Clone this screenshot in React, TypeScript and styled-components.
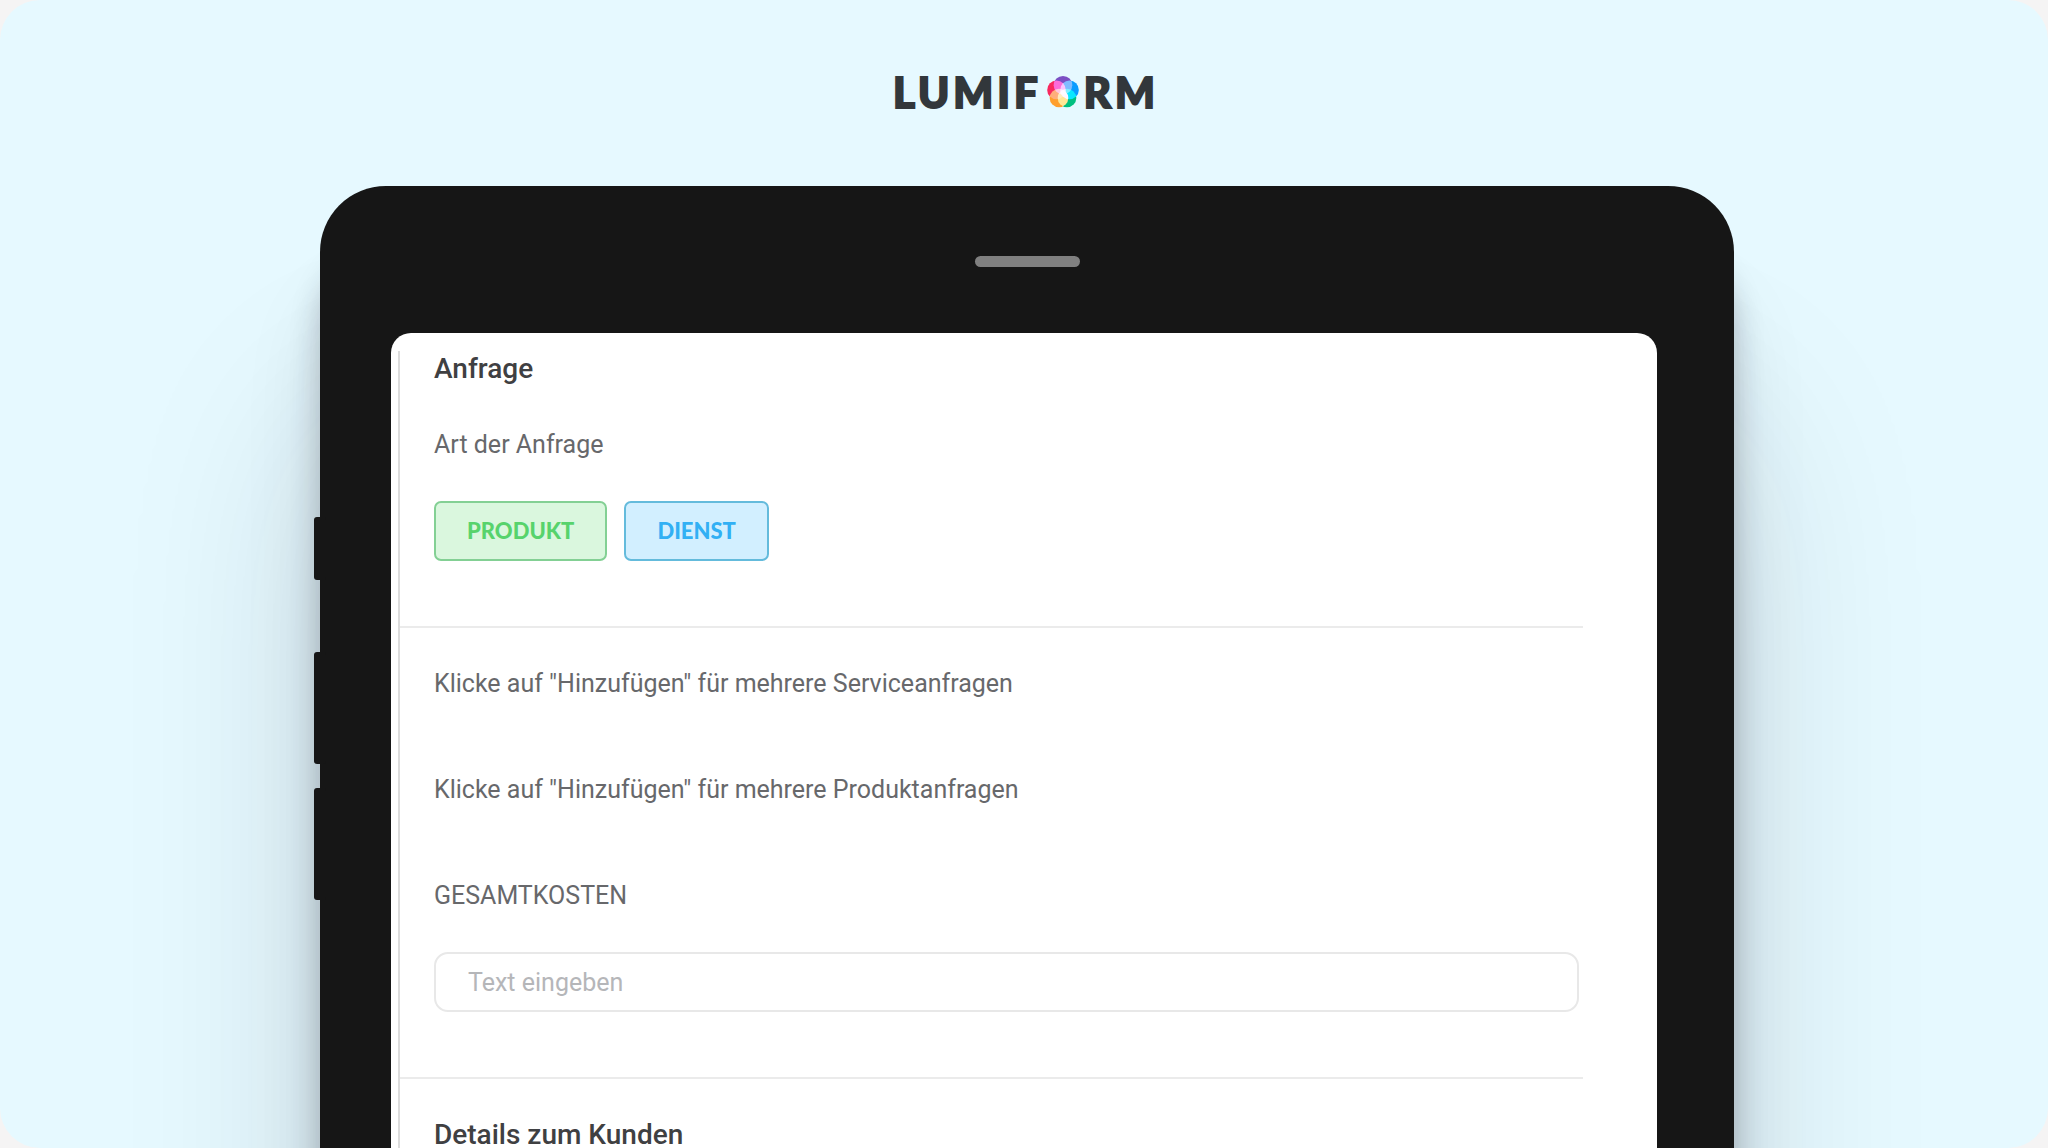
import React from "react";
import styled, { createGlobalStyle } from "styled-components";

const GlobalStyle = createGlobalStyle`
  *, *::before, *::after { box-sizing: border-box; }
  body {
    margin: 0;
    background: #f5f4f4;
    font-family: Roboto, "Liberation Sans", sans-serif;
    color: #67686b;
  }
`;

const Stage = styled.main`
  display: flex;
  flex-direction: column;
  height: 100vh;
  overflow: hidden;
  border-radius: 40px;
  background: #e6f9ff;
`;

const Brand = styled.header`
  display: flex;
  align-items: center;
  justify-content: center;
  flex: none;
  gap: 5px;
  height: 186px;
  padding: 0 0 2px 4px;
`;

const BrandText = styled.span`
  font: 900 42px/56px Lato, sans-serif;
  letter-spacing: 4px;
  color: #32373b;
  -webkit-text-stroke: 2px #32373b;
`;

const BrandMark = styled.svg`
  display: block;
  width: 32px;
  height: 34px;
  isolation: isolate;
`;

const Petal = styled.circle`
  mix-blend-mode: screen;
`;

const Tablet = styled.section`
  position: relative;
  flex: none;
  margin: 0 314px 0 320px;
  padding-top: 70px;
  border-radius: 66px 66px 0 0;
  background: #161616;
  box-shadow:
    0 230px 200px rgba(30, 30, 40, 0.15),
    0 110px 80px rgba(30, 30, 40, 0.1),
    0 70px 30px rgba(30, 30, 40, 0.24);
`;

const SideKey = styled.span<{ $top: number; $height: number }>`
  position: absolute;
  left: -6px;
  top: ${(p) => p.$top}px;
  width: 12px;
  height: ${(p) => p.$height}px;
  border-radius: 3px;
  background: #161616;
`;

const Speaker = styled.div`
  width: 105px;
  height: 11px;
  margin: 0 auto 66px;
  border-radius: 6px;
  background: #808080;
`;

const Screen = styled.div`
  margin: 0 77px 0 71px;
  padding: 18px 74px 230px 7px;
  border-radius: 20px 20px 0 0;
  background: #fff;
`;

const Form = styled.form`
  border-left: 2px solid #dcdcdc;
`;

const Section = styled.section`
  padding: 0 4px 65px 34px;
  border-bottom: 2px solid #ebebeb;

  & + & {
    padding-top: 38px;
  }
`;

const Title = styled.h2`
  margin: 0;
  font-size: 28px;
  font-weight: 500;
  line-height: 36px;
  color: #3f4042;
`;

const Group = styled.fieldset`
  margin: 40px 0 0;
  padding: 0;
  border: 0;
`;

const Legend = styled.legend`
  padding: 0;
  font-size: 25px;
  line-height: 36px;
`;

const Choices = styled.div`
  display: flex;
  gap: 17px;
  margin-top: 38px;
`;

const Choice = styled.button<{ $tone: "green" | "blue" }>`
  height: 60px;
  padding: 0 31px;
  border: 2px solid ${(p) => (p.$tone === "green" ? "#83d094" : "#64bbdc")};
  border-radius: 7px;
  background: ${(p) => (p.$tone === "green" ? "#daf7de" : "#d2efff")};
  color: ${(p) => (p.$tone === "green" ? "#57d36c" : "#32b0f4")};
  font: 900 22px/28px Lato, sans-serif;
`;

const Line = styled.p`
  margin: 0 0 70px;
  font-size: 25px;
  line-height: 36px;
`;

const Label = styled.label`
  display: block;
  font-size: 25px;
  line-height: 36px;
`;

const TextBox = styled.input`
  display: block;
  width: 100%;
  height: 60px;
  margin-top: 38px;
  padding: 0 32px;
  border: 2px solid #e8e8e8;
  border-radius: 14px;
  background: #fff;
  color: #67686b;
  font: 400 25px/36px Roboto, "Liberation Sans", sans-serif;

  &::placeholder {
    color: #b5b6b9;
    opacity: 1;
  }
`;

function Mark() {
  return (
    <BrandMark viewBox="0 0 32 34" aria-hidden="true">
      <Petal cx="16" cy="10.2" r="9.3" fill="#7b4fc4" />
      <Petal cx="22.5" cy="14.9" r="9.3" fill="#0a9cff" />
      <Petal cx="20" cy="23" r="9.3" fill="#00c080" />
      <Petal cx="12" cy="23" r="9.3" fill="#ff9f2c" />
      <Petal cx="9.5" cy="14.9" r="9.3" fill="#f8285f" />
    </BrandMark>
  );
}

export default function App() {
  return (
    <>
      <GlobalStyle />
      <Stage>
        <Brand>
          <BrandText>LUMIF</BrandText>
          <Mark />
          <BrandText>RM</BrandText>
        </Brand>
        <Tablet>
          <SideKey $top={331} $height={63} />
          <SideKey $top={466} $height={112} />
          <SideKey $top={602} $height={112} />
          <Speaker />
          <Screen>
            <Form onSubmit={(e) => e.preventDefault()}>
              <Section>
                <Title>Anfrage</Title>
                <Group>
                  <Legend>Art der Anfrage</Legend>
                  <Choices>
                    <Choice type="button" $tone="green">PRODUKT</Choice>
                    <Choice type="button" $tone="blue">DIENST</Choice>
                  </Choices>
                </Group>
              </Section>
              <Section>
                <Line>Klicke auf "Hinzufügen" für mehrere Serviceanfragen</Line>
                <Line>Klicke auf "Hinzufügen" für mehrere Produktanfragen</Line>
                <Label htmlFor="gesamtkosten">GESAMTKOSTEN</Label>
                <TextBox id="gesamtkosten" type="text" placeholder="Text eingeben" />
              </Section>
              <Section>
                <Title>Details zum Kunden</Title>
              </Section>
            </Form>
          </Screen>
        </Tablet>
      </Stage>
    </>
  );
}
